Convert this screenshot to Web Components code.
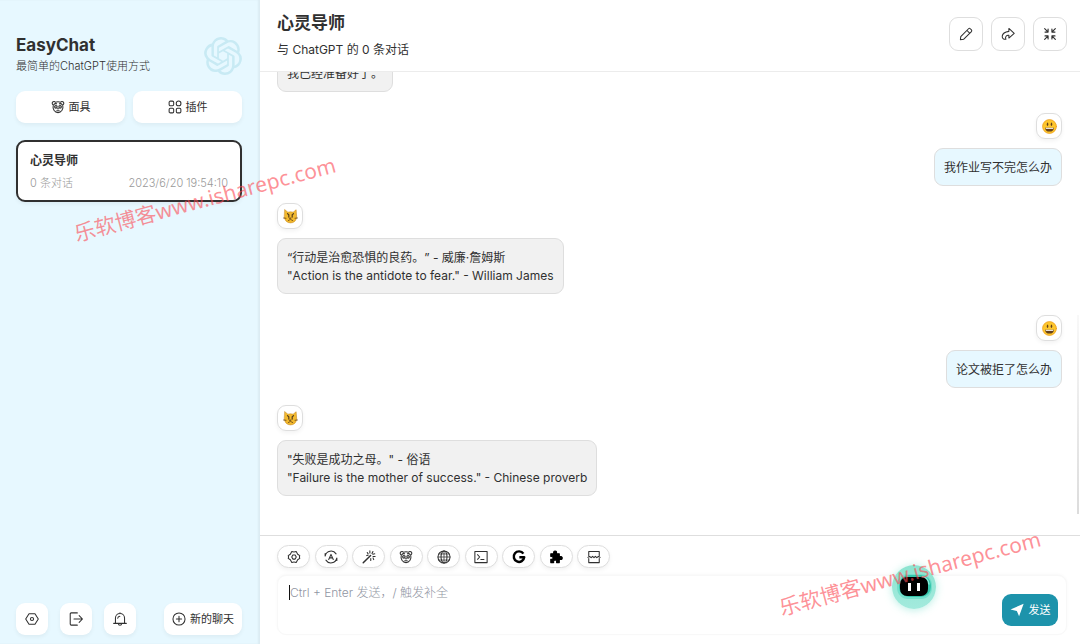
<!DOCTYPE html>
<html lang="zh-CN">
<head>
<meta charset="utf-8">
<title>EasyChat</title>
<style>
html, body { margin: 0; height: 100%; }
body {
  font-family: Inter, "Noto Sans CJK SC", sans-serif;
  font-size: 12px; line-height: 18px; color: #303030; background: #fff;
  text-spacing-trim: space-all;
  --primary: #1d93ab; --second: #e7f8ff; --line: #dedede;
  --shadow: 0 2px 4px rgba(0,0,0,.05);
}
</style>
</head>
<body>
<chat-app></chat-app>
<script>
const ICONS = {
  mask: '<path d="M2.6 5.6A2 2 0 1 1 5 2.6Q8 1.6 11 2.6A2 2 0 1 1 13.4 5.6Q14.2 9 12.6 11.8Q10.8 14.4 8 14.4T3.4 11.8Q1.8 9 2.6 5.6Z"/><path d="M3.2 5.2Q4.6 3.6 6.4 4.4M12.8 5.2Q11.4 3.6 9.6 4.4"/><circle cx="5.6" cy="7.8" r="1.5"/><circle cx="10.4" cy="7.8" r="1.5"/><path d="M5.7 7.8h.1M10.3 7.8h.1M7.4 10h1.2M6.6 12.2h2.8"/>',
  plugin: '<rect x="1.3" y="1.3" width="5.2" height="5.2" rx="1.4"/><circle cx="12.1" cy="3.9" r="2.7"/><rect x="1.3" y="9.5" width="5.2" height="5.2" rx="1.4"/><rect x="9.5" y="9.5" width="5.2" height="5.2" rx="1.4"/>',
  hex: '<path d="M4.6 2.1h6.8L15.2 8l-3.8 5.9H4.6L.8 8Z"/><circle cx="8" cy="8" r="1.8"/>',
  exit: '<path d="M9.5 1H2.6Q1.4 1 1.4 2.3v11.4q0 1.3 1.2 1.3h6.9M5.7 8h9.6M11.6 4.2 15.4 8l-3.8 3.8"/>',
  bell: '<path d="M2.8 12.8V7a5.2 5.2 0 0 1 10.4 0v5.8M.8 13h14.4M6.2 13.4a1.8 1.8 0 0 0 3.6 0M8 1.8v-1M5.4 7.2A2.6 2.6 0 0 1 7.8 4.8"/>',
  add: '<circle cx="8" cy="8" r="6.9"/><path d="M8 5v6M5 8h6"/>',
  pencil: '<path d="M1.6 14.6 2 11.1 10.9 2Q11.9 1 12.9 2L14.2 3.3Q15 4.2 14.2 5.2L5.2 14.1ZM9.2 4l2.9 2.9"/>',
  share: '<path d="M9 1.6 15.1 7.2 9 12.6V9.4Q7 9 5.8 10.6T5.6 14Q1.2 14.2 1.4 10.4 2 5.9 9 5Z"/>',
  shrink: '<path d="M5.8 2.3v3.5H2.3M5.6 5.6 1.9 1.9M10.2 2.3v3.5h3.5M10.4 5.6l3.7-3.7M5.8 13.7v-3.5H2.3M5.6 10.4l-3.7 3.7M10.2 13.7v-3.5h3.5M10.4 10.4l3.7 3.7" stroke-width="1.3"/>',
  gear: '<path d="M5.5 1.8Q8 2.8 10.5 1.8L12.2 4.8 14.6 6.4Q13.8 8 14.6 9.6L12.2 11.2 10.5 14.2Q8 13.2 5.5 14.2L3.8 11.2 1.4 9.6Q2.2 8 1.4 6.4L3.8 4.8Z"/><path d="M6.7 5.6h2.6L10.6 8 9.3 10.4H6.7L5.4 8Z"/>',
  auto: '<path d="M1.4 6.6A6.8 6.8 0 0 1 13.8 4.4M14.6 9.4A6.8 6.8 0 0 1 2.2 11.6M1.3 4v2.8M14.7 9.2V12M5.4 10.8 8 5l2.6 5.8M6.3 9h3.4"/>',
  wand: '<path d="M1.4 14.6 9.8 6.2" stroke-width="1.7"/><path d="M9 1v2.4M6 2.8 7 4.4M12.5 1.8 11.4 4M14.6 4.4l-2.2.5M15 7.4h-2.4M12.6 9l.8 2M10 9.6V12M5.4 6.4 7 6"/>',
  globe: '<circle cx="8" cy="8" r="6.9"/><ellipse cx="8" cy="8" rx="3.4" ry="6.9"/><path d="M1.1 8h13.8M2.2 4.5h11.6M2.2 11.5h11.6M8 1.1v13.8" stroke-width=".9"/>',
  term: '<rect x="1" y="1.6" width="14" height="12.8"/><path d="M4 5.4 6.5 8 4 10.6M7.8 10.8h3.6"/>',
  google: '<path d="M13 4.2A6 6 0 1 0 14 8.2H8.4" stroke="#000" stroke-width="2.8" stroke-linecap="butt"/>',
  puzzle: '<path fill="#000" stroke="#000" d="M2 4.4h3.5Q4.6 1.2 7 1.2T8.4 4.4h3.4v3.4Q15.2 6.8 15.2 9.2T11.8 10.6v3.8H8.6Q9.2 11.4 7 11.4T5.4 14.4H2v-3.7Q4.6 11 4.6 9.1T2 7.5Z"/>',
  cut: '<path d="M2 6.6V1.6h12v5M2 9.8v4.6h12V9.8M1 8.4l2-1 1.8 1.4L6.4 7.2 8 8.8 9.6 7.2l1.6 1.6L13 7.4l2 1"/>',
  send: '<path fill="currentColor" stroke="none" d="M.6 7.3 15.6.8 10.4 15.2 7.8 9.1Z"/>',
  smile: '<circle cx="8" cy="8" r="7.4" fill="#fdc62c" stroke="#eb9c22" stroke-width=".8"/><path d="M3.2 9.2h9.6Q12.3 13.4 8 13.4T3.2 9.2Z" fill="#64411d" stroke="none"/><path d="M4 9.4h8v1.1H4Z" fill="#fff" stroke="none"/><ellipse cx="5.9" cy="5.6" rx=".8" ry="1.8" fill="#64411d" stroke="none"/><ellipse cx="10.1" cy="5.6" rx=".8" ry="1.8" fill="#64411d" stroke="none"/>',
  cat: '<path d="M2 .8 5.2 3.4Q8 2.6 10.8 3.4L14 .8 14.6 8.5Q13.6 14.8 8 14.8T1.4 8.5Z" fill="#f2b92d" stroke="#c88a20" stroke-width=".6"/><path d="M4.8 5 6.2 6V8.6M11.2 5 9.8 6V8.6" stroke="#4d371b" stroke-width="1.2"/><path d="M7.2 9.6h1.6L8 10.4ZM5.6 12.2Q8 9.6 10.4 12.2M.6 9.6l2.6.3M15.4 9.6l-2.6.3" stroke="#6d4a18" stroke-width=".9"/>',
};

/* An icon picked by name; its size comes from --icon-size. */
class ChatIcon extends HTMLElement {
  connectedCallback() {
    const root = this.attachShadow({ mode: 'open' });
    root.innerHTML = `<style>
      :host { display: block; flex: none; width: var(--icon-size, 14px); height: var(--icon-size, 14px); }
      svg { display: block; width: 100%; height: 100%; overflow: visible; }
    </style><svg viewBox="0 0 16 16" fill="none" stroke="currentColor" stroke-width="1.2" stroke-linejoin="round" stroke-linecap="round" aria-hidden="true">${ICONS[this.getAttribute('name')]}</svg>`;
  }
}

/* Button with an icon and an optional label in the slot. */
class IconButton extends HTMLElement {
  connectedCallback() {
    const root = this.attachShadow({ mode: 'open' });
    root.innerHTML = `<style>
      :host { display: block; }
      button {
        box-sizing: border-box; width: 100%; height: 32px; min-width: 32px; padding: 0 8px;
        display: flex; align-items: center; justify-content: center; gap: 4px;
        border: 0; border-radius: 9px; background: #fff; color: #303030;
        font: inherit; line-height: 16px; white-space: nowrap; cursor: pointer; box-shadow: var(--shadow);
      }
      :host([kind="outline"]) button { width: 34px; height: 34px; border: 1px solid var(--line); box-shadow: none; padding: 0; }
      :host([kind="pill"]) button { width: 33px; height: 23px; border: 1px solid var(--line); border-radius: 12px; padding: 0; box-shadow: var(--shadow); }
      :host([kind="primary"]) button { background: var(--primary); color: #fff; box-shadow: none; gap: 5px; font-size: 11px; }
      :host([kind="small"]) button { font-size: 11px; }
    </style><button type="button" aria-label="${this.getAttribute('label') || this.textContent}"><chat-icon name="${this.getAttribute('icon')}"></chat-icon><slot></slot></button>`;
  }
}

class ChatSidebar extends HTMLElement {
  connectedCallback() {
    const root = this.attachShadow({ mode: 'open' });
    root.innerHTML = `<style>
      :host { box-sizing: border-box; display: flex; flex-direction: column; width: 260px; flex: none;
        padding: 35px 18px 9px 16px; background: var(--second); box-shadow: inset -2px 0 2px rgba(0,0,0,.05); }
      header { display: flex; justify-content: space-between; align-items: flex-start; }
      h1 { margin: 0; font-size: 17px; line-height: 21px; font-weight: 700; }
      p { margin: 2px 0 0; font-size: 11px; line-height: 16px; font-weight: 300; }
      .logo { width: 38px; height: 38px; margin-top: 2px; flex: none; }
      .tools { display: flex; gap: 8px; margin-top: 16px; }
      .tools > * { flex: 1; }
      article { margin-top: 17px; padding: 10px 12px 9px; border: 2px solid #303030; border-radius: 9px; background: #fff; box-shadow: var(--shadow); }
      h2 { margin: 0; font-size: 12px; line-height: 18px; font-weight: 700; }
      .meta { display: flex; justify-content: space-between; margin-top: 5px; font-size: 11px; line-height: 16px; font-weight: 300; color: #999; }
      footer { margin-top: auto; display: flex; justify-content: space-between; }
      .left { display: flex; gap: 12px; }
    </style>
    <header><div><h1>EasyChat</h1><p>最简单的ChatGPT使用方式</p></div>
      <svg class="logo" viewBox="0 0 24 24" fill="#c8eaf4" aria-hidden="true"><path d="M22.2819 9.8211a5.9847 5.9847 0 0 0-.5157-4.9108 6.0462 6.0462 0 0 0-6.5098-2.9A6.0651 6.0651 0 0 0 4.9807 4.1818a5.9847 5.9847 0 0 0-3.9977 2.9 6.0462 6.0462 0 0 0 .7427 7.0966 5.98 5.98 0 0 0 .511 4.9107 6.051 6.051 0 0 0 6.5146 2.9001A5.9847 5.9847 0 0 0 13.2599 24a6.0557 6.0557 0 0 0 5.7718-4.2058 5.9894 5.9894 0 0 0 3.9977-2.9001 6.0557 6.0557 0 0 0-.7475-7.0729zm-9.022 12.6081a4.4755 4.4755 0 0 1-2.8764-1.0408l.1419-.0804 4.7783-2.7582a.7948.7948 0 0 0 .3927-.6813v-6.7369l2.02 1.1686a.071.071 0 0 1 .038.052v5.5826a4.504 4.504 0 0 1-4.4945 4.4944zm-9.6607-4.1254a4.4708 4.4708 0 0 1-.5346-3.0137l.142.0852 4.783 2.7582a.7712.7712 0 0 0 .7806 0l5.8428-3.3685v2.3324a.0804.0804 0 0 1-.0332.0615L9.74 19.9502a4.4992 4.4992 0 0 1-6.1408-1.6464zM2.3408 7.8956a4.485 4.485 0 0 1 2.3655-1.9728V11.6a.7664.7664 0 0 0 .3879.6765l5.8144 3.3543-2.0201 1.1685a.0757.0757 0 0 1-.071 0l-4.8303-2.7865A4.504 4.504 0 0 1 2.3408 7.872zm16.5963 3.8558L13.1038 8.364 15.1192 7.2a.0757.0757 0 0 1 .071 0l4.8303 2.7913a4.4944 4.4944 0 0 1-.6765 8.1042v-5.6772a.79.79 0 0 0-.407-.667zm2.0107-3.0231l-.142-.0852-4.7735-2.7818a.7759.7759 0 0 0-.7854 0L9.409 9.2297V6.8974a.0662.0662 0 0 1 .0284-.0615l4.8303-2.7866a4.4992 4.4992 0 0 1 6.6802 4.66zM8.3065 12.863l-2.02-1.1638a.0804.0804 0 0 1-.038-.0567V6.0742a4.4992 4.4992 0 0 1 7.3757-3.4537l-.142.0805L8.704 5.459a.7948.7948 0 0 0-.3927.6813zm1.0976-2.3654l2.602-1.4998 2.6069 1.4998v2.9994l-2.5974 1.4997-2.6067-1.4997Z"/></svg></header>
    <nav class="tools"><icon-button kind="small" icon="mask">面具</icon-button><icon-button kind="small" icon="plugin">插件</icon-button></nav>
    <article><h2>心灵导师</h2><div class="meta"><span>0 条对话</span><time>2023/6/20 19:54:10</time></div></article>
    <footer><div class="left"><icon-button icon="hex" label="设置"></icon-button><icon-button icon="exit" label="退出"></icon-button><icon-button icon="bell" label="通知"></icon-button></div>
      <icon-button kind="small" icon="add">新的聊天</icon-button></footer>`;
  }
}

/* One message; the "from" attribute is user or bot. */
class ChatMessage extends HTMLElement {
  connectedCallback() {
    const root = this.attachShadow({ mode: 'open' });
    const icon = this.getAttribute('from') === 'user' ? 'smile' : 'cat';
    root.innerHTML = `<style>
      :host { display: flex; flex: none; flex-direction: column; align-items: flex-start; gap: 9px; margin-bottom: 21px; --bubble: #f1f1f1; }
      :host([from="user"]) { align-items: flex-end; margin-bottom: 17px; --bubble: var(--second); }
      .avatar { box-sizing: border-box; width: 26px; height: 26px; display: grid; place-items: center; border: 1px solid var(--line); border-radius: 9px; box-shadow: var(--shadow); --icon-size: 15px; }
      .bubble { padding: 10px 9px 8px; border: 1px solid var(--line); border-radius: 9px; background: var(--bubble); }
    </style><div class="avatar"><chat-icon name="${icon}"></chat-icon></div><div class="bubble"><slot></slot></div>`;
  }
}

class ChatWindow extends HTMLElement {
  connectedCallback() {
    const root = this.attachShadow({ mode: 'open' });
    const tools = [['gear','设置'],['auto','主题'],['wand','提示词'],['mask','面具'],['globe','联网'],['term','终端'],['google','搜索'],['puzzle','插件'],['cut','清除']]
      .map(([i, l]) => `<icon-button kind="pill" icon="${i}" label="${l}"></icon-button>`).join('');
    root.innerHTML = `<style>
      :host { display: flex; flex-direction: column; flex: 1; min-width: 0; }
      header { display: flex; flex: none; justify-content: space-between; align-items: center; padding: 11px 13px 12px 17px; border-bottom: 1px solid #ececec; }
      h2 { margin: 0; font-size: 17px; line-height: 24px; font-weight: 700; }
      header p { margin: 6px 0 0; line-height: 18px; }
      .actions { display: flex; gap: 8px; margin-top: -2px; }
      .messages { flex: 1; min-height: 0; position: relative; overflow: hidden; display: flex; flex-direction: column; justify-content: flex-end; padding: 0 18px 18px 17px; }
      .thumb { position: absolute; right: 1px; bottom: 21px; width: 2px; height: 43%; background: linear-gradient(#f8f8f8, #dcdcdc); }
      .panel { flex: none; padding: 9px 13px 9px 17px; border-top: 1px solid var(--line); }
      .tools { display: flex; justify-content: space-between; max-width: 333px; }
      .entry { position: relative; display: grid; margin-top: 7px; }
      textarea { grid-area: 1 / 1; box-sizing: border-box; width: 100%; height: 60px; padding: 8px 90px 8px 12px; resize: none; outline: 0;
        border: 1px solid #f8f8f8; border-radius: 9px; background: #fff; box-shadow: 0 -1px 3px rgba(0,0,0,.03); font: inherit; color: inherit; }
      textarea::placeholder { color: #9095a2; opacity: 1; font-weight: 300; }
      .caret { position: absolute; left: 12px; top: 10px; width: 1px; height: 15px; background: #111; }
      .entry icon-button { grid-area: 1 / 1; place-self: end; margin: 0 9px 9px 0; width: 56px; }
    </style>
    <header><div><h2>心灵导师</h2><p>与 ChatGPT 的 0 条对话</p></div>
      <div class="actions"><icon-button kind="outline" icon="pencil" label="编辑"></icon-button><icon-button kind="outline" icon="share" label="分享"></icon-button><icon-button kind="outline" icon="shrink" label="缩小"></icon-button></div></header>
    <div class="messages">
      <chat-message>我已经准备好了。</chat-message>
      <chat-message from="user">我作业写不完怎么办</chat-message>
      <chat-message>“行动是治愈恐惧的良药。” - 威廉·詹姆斯<br>"Action is the antidote to fear." - William James</chat-message>
      <chat-message from="user">论文被拒了怎么办</chat-message>
      <chat-message>"失败是成功之母。" - 俗语<br>"Failure is the mother of success." - Chinese proverb</chat-message>
      <div class="thumb"></div>
    </div>
    <div class="panel"><div class="tools">${tools}</div>
      <div class="entry"><textarea aria-label="消息" placeholder="Ctrl + Enter 发送，/ 触发补全"></textarea><span class="caret"></span>
      <icon-button kind="primary" icon="send">发送</icon-button></div></div>`;
  }
}

/* Floating assistant ball. */
class BotBall extends HTMLElement {
  connectedCallback() {
    const root = this.attachShadow({ mode: 'open' });
    root.innerHTML = `<style>
      :host { display: block; width: 44px; height: 44px; border-radius: 50%; box-shadow: 0 1px 8px rgba(80,215,190,.4); }
      svg { display: block; }
    </style><svg width="44" height="44" viewBox="0 0 44 44" aria-hidden="true">
      <defs><linearGradient id="g" x2="0" y2="1"><stop stop-color="#8ce4d0"/><stop offset="1" stop-color="#a3eadd"/></linearGradient></defs>
      <circle cx="22" cy="22" r="22" fill="url(#g)"/>
      <rect x="5" y="9" width="35" height="25" rx="11" fill="#74dfcb"/>
      <rect x="7" y="10" width="32" height="22" rx="10" fill="#35c6ab"/>
      <path d="M30 11.5q6 1 7 8" fill="none" stroke="#8cecd9" stroke-width="1.5"/>
      <rect x="8" y="12" width="28" height="19" rx="7"/>
      <rect x="16" y="18" width="3" height="8" fill="#fff"/><rect x="25" y="18" width="3" height="8" fill="#fff"/></svg>`;
  }
}

class WaterMark extends HTMLElement {
  connectedCallback() {
    const root = this.attachShadow({ mode: 'open' });
    root.innerHTML = `<style>
      :host { display: block; transform: rotate(-15deg); pointer-events: none; white-space: nowrap;
        font: 21px/30px "Noto Sans", "Noto Sans CJK SC", sans-serif; color: rgba(252,72,82,.6); }
    </style><slot></slot>`;
  }
}

class ChatApp extends HTMLElement {
  connectedCallback() {
    const root = this.attachShadow({ mode: 'open' });
    root.innerHTML = `<style>
      :host { display: flex; position: relative; height: 100vh; overflow: hidden; }
      bot-ball { position: absolute; right: 144px; bottom: 35px; }
      water-mark { position: absolute; }
      .a { left: 70px; top: 184px; }
      .b { right: 35px; bottom: 56px; }
    </style><chat-sidebar></chat-sidebar><chat-window></chat-window><bot-ball></bot-ball>
    <water-mark class="a">乐软博客www.isharepc.com</water-mark><water-mark class="b">乐软博客www.isharepc.com</water-mark>`;
  }
}

customElements.define('chat-icon', ChatIcon);
customElements.define('icon-button', IconButton);
customElements.define('chat-sidebar', ChatSidebar);
customElements.define('chat-message', ChatMessage);
customElements.define('chat-window', ChatWindow);
customElements.define('bot-ball', BotBall);
customElements.define('water-mark', WaterMark);
customElements.define('chat-app', ChatApp);
</script>
</body>
</html>
